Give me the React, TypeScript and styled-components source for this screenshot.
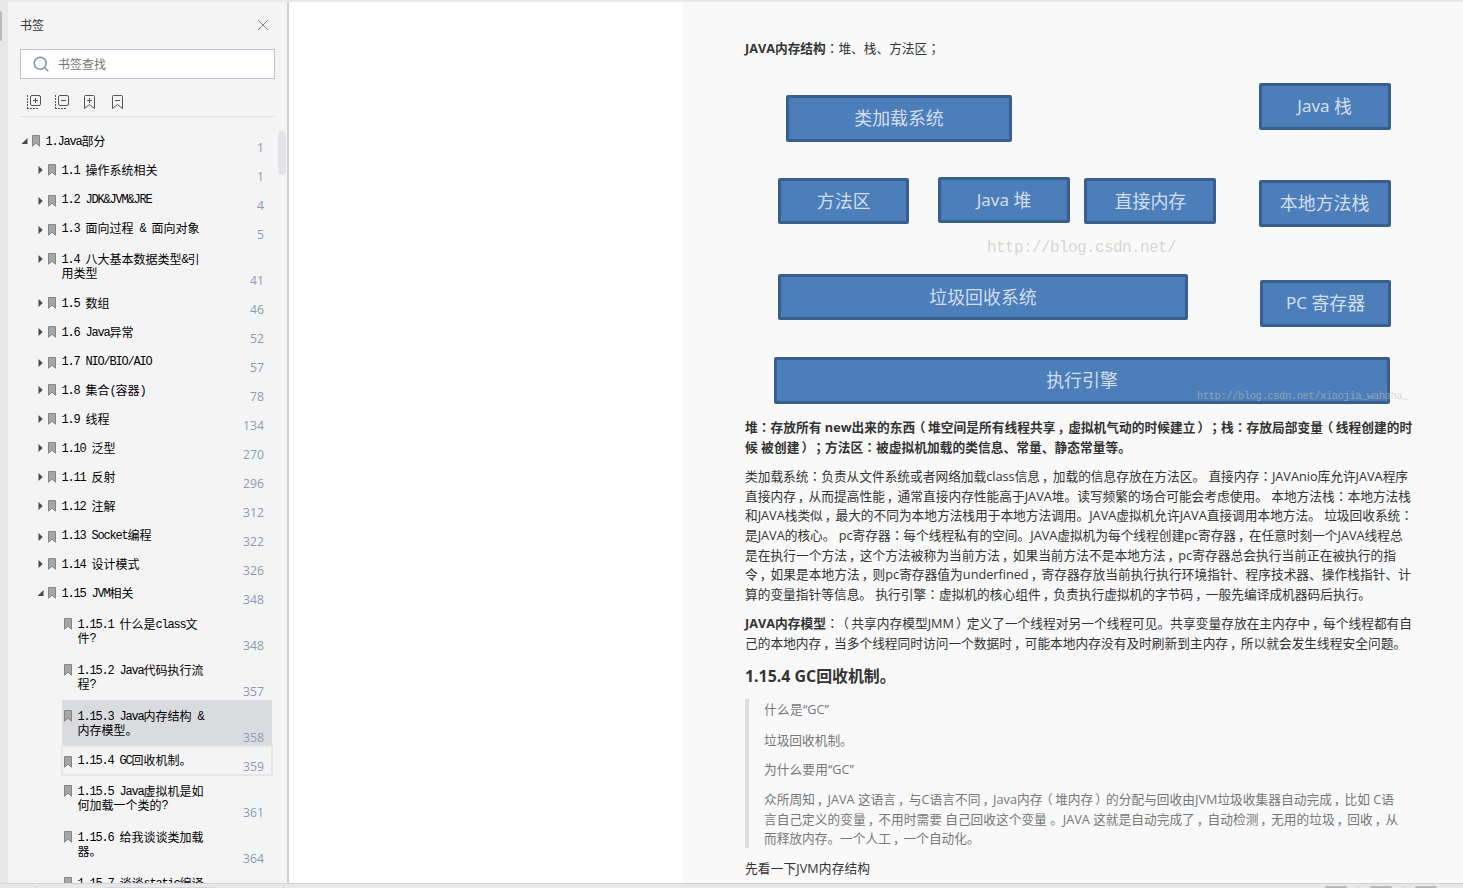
import React from 'react';
import styled, { createGlobalStyle } from 'styled-components';

const GlobalStyle = createGlobalStyle`
  * { box-sizing: border-box; }
  body { margin: 0; overflow: hidden; background: #fff; }
`;

const sans = `"Open Sans", "Noto Sans CJK SC", sans-serif`;

const Window = styled.div`
  width: 1463px;
  height: 888px;
  display: flex;
  flex-direction: column;
  overflow: hidden;
  font-family: ${sans};
`;

const TopEdge = styled.div`
  height: 2px;
  flex: none;
  background: linear-gradient(#e3e3e3, #efefef);
`;

const Workspace = styled.div`
  display: flex;
  height: 881px;
  flex: none;
`;

const LeftRail = styled.div`
  width: 8px;
  padding-top: 9px;
  background: #e8e8e8;
`;

const RailHandle = styled.div`
  width: 2px;
  height: 30px;
  background: #b9b9b9;
  border-radius: 0 2px 2px 0;
`;

const Sidebar = styled.aside`
  width: 281px;
  height: 881px;
  display: flex;
  flex-direction: column;
  overflow: hidden;
  position: relative;
  background: #f4f4f4;
  border-right: 2px solid #d0d0d4;
`;

const SidebarHeader = styled.header`
  display: flex;
  flex: none;
  justify-content: space-between;
  align-items: center;
  height: 45px;
  margin: 0 18px 0 12px;
  font: 12px/18px "Noto Sans CJK SC", sans-serif;
  color: #333;
`;

const SearchBox = styled.div`
  display: flex;
  flex: none;
  align-items: center;
  gap: 9px;
  width: 255px;
  height: 30px;
  margin: 2px 0 0 12px;
  padding-left: 12px;
  background: #fff;
  border: 1px solid #bcc4d0;
  font: 12px/18px "Noto Sans CJK SC", sans-serif;
  color: #757575;
`;

const Toolbar = styled.div`
  display: flex;
  flex: none;
  align-items: center;
  gap: 12px;
  width: 255px;
  height: 38px;
  margin-left: 12px;
  padding: 8px 0 0 6px;
  border-bottom: 1px solid #dcdfe5;
`;

const Tree = styled.div`
  display: flex;
  flex: none;
  flex-direction: column;
  margin-top: 10px;
`;

const ScrollThumb = styled.div`
  position: absolute;
  right: 1px;
  top: 129px;
  width: 8px;
  height: 44px;
  border-radius: 4px;
  background: #e3e4e8;
`;

const rowInset = [13, 29, 54];

const TreeRow = styled.div<{ $level: number; $lines: number; $state?: string }>`
  display: flex;
  flex: none;
  height: ${(p) => (p.$lines > 1 ? 46 : 29)}px;
  width: ${(p) => (p.$level === 2 ? 210 : 256 - rowInset[p.$level])}px;
  margin-left: ${(p) => rowInset[p.$level]}px;
  padding-left: ${(p) => (p.$level === 2 ? 2 : 0)}px;
  padding-right: ${(p) => (p.$level === 2 ? 8 : 0)}px;
  background: ${(p) => (p.$state === 'selected' ? '#dadbdf' : 'transparent')};
  box-shadow: ${(p) =>
    p.$state === 'focused' ? '0 0 0 1px #e6e6e8, inset 0 0 0 1px #e6e6e8, inset 0 1px #d0d3d8' : 'none'};
`;

const ArrowCell = styled.span<{ $drop: number }>`
  width: 11px;
  flex: none;
  padding-top: ${(p) => p.$drop}px;
  line-height: 0;
`;

const MarkCell = styled.span<{ $drop: number }>`
  width: 13.5px;
  flex: none;
  padding-top: ${(p) => p.$drop}px;
  line-height: 0;
`;

const RowTitle = styled.div<{ $lines: number }>`
  flex: 1;
  padding-top: ${(p) => (p.$lines > 1 ? 9 : 7)}px;
  font: 12px/14px "Noto Sans CJK SC", sans-serif;
  color: #000;
  white-space: pre;
`;

const TitleLine = styled.div`
  height: 14px;
  display: flex;
`;

const Mono = styled.span`
  font-family: "Liberation Mono", monospace;
  line-height: 16px;
  letter-spacing: -1.2px;
`;

const PageNo = styled.span`
  align-self: flex-end;
  font: 12.2px/16px ${sans};
  color: #8c9ab4;
`;

const Gutter = styled.div`
  width: 394px;
  background: #fff;
`;

const Page = styled.main`
  width: 780px;
  height: 881px;
  overflow: hidden;
  padding: 36px 0 0 62px;
  background: #f9f9f9;
  color: #333;
`;

const Paragraph = styled.div<{ $gap?: number; $bold?: boolean }>`
  margin-bottom: ${(p) => p.$gap ?? 10}px;
  font-weight: ${(p) => (p.$bold ? 700 : 400)};
`;

const Line = styled.div<{ $w: number }>`
  width: ${(p) => p.$w}px;
  height: 19.6px;
  font-size: 12.7px;
  line-height: 19.6px;
  white-space: nowrap;
  text-spacing-trim: space-all;
  text-align: justify;
  text-align-last: justify;
`;

const Punct = styled.span<{ $shift: number; $tc: boolean }>`
  font-family: ${(p) => (p.$tc ? '"Noto Sans CJK TC"' : '"Noto Sans CJK SC"')}, sans-serif;
  margin-left: ${(p) => p.$shift}px;
  margin-right: ${(p) => -p.$shift}px;
`;

const Heading = styled.h3`
  margin: 0;
  height: 37px;
  font-size: 15.9px;
  line-height: 28px;
  font-weight: 700;
  white-space: nowrap;
`;

const Quote = styled.blockquote`
  height: 149px;
  margin: 0 0 11px;
  padding: 1px 0 0 15px;
  border-left: 4px solid #dadce0;
  color: #777;
`;

const Diagram = styled.div`
  position: relative;
  height: 359.4px;
  margin-left: -62px;
`;

const Block = styled.div<{ $x: number; $y: number; $w: number; $h: number }>`
  position: absolute;
  left: ${(p) => p.$x - 683}px;
  top: ${(p) => p.$y - 57.6}px;
  width: ${(p) => p.$w}px;
  height: ${(p) => p.$h}px;
  display: flex;
  align-items: center;
  justify-content: center;
  background: #4c7eba;
  border: 3.5px solid #385f8e;
  border-radius: 2px;
  color: #d3dfee;
  font: 400 18px/24px "Noto Sans", "Noto Sans CJK SC", sans-serif;
  font-size: 17.9px;
  white-space: nowrap;
`;

const Latin = styled.span`
  font-size: 17px;
  white-space: pre;
`;

const Watermark = styled.span<{ $x: number; $y: number; $size: number; $track: number }>`
  position: absolute;
  left: ${(p) => p.$x - 683}px;
  top: ${(p) => p.$y - 57.6}px;
  font: ${(p) => p.$size}px/20px "Liberation Mono", monospace;
  letter-spacing: ${(p) => p.$track}px;
  color: rgba(190, 190, 180, 0.6);
  white-space: nowrap;
`;

const StatusBar = styled.footer`
  height: 5px;
  flex: none;
  display: flex;
  align-items: flex-end;
  background: #e8e8e8;
  border-top: 1px solid #d3d3d6;
`;

const StatusPiece = styled.i<{ $ml: number; $w: number; $h: number; $c: string }>`
  margin-left: ${(p) => p.$ml}px;
  width: ${(p) => p.$w}px;
  height: ${(p) => p.$h}px;
  background: ${(p) => p.$c};
  border-radius: ${(p) => (p.$w > 1 && p.$h > 1 ? '3px 3px 0 0' : '0')};
`;

const CloseIcon = () => (
  <svg width="12" height="12" viewBox="0 0 12 12" stroke="#858585" fill="none">
    <path d="M1 1L11 11M11 1L1 11" />
  </svg>
);

const SearchIcon = () => (
  <svg width="16" height="16" viewBox="0 0 16 16" stroke="#8590a3" strokeWidth="1.5" fill="none">
    <circle cx="7.2" cy="7.2" r="6" />
    <path d="M11.5 11.5L15.3 15.3" />
  </svg>
);

const BoxIcon = ({ plus }: { plus?: boolean }) => (
  <svg width="16" height="16" viewBox="0 0 16 16" stroke="#555" fill="none">
    <rect x="4.5" y="1.5" width="10" height="10" rx="1.5" />
    <path d="M7 6.5H12" />
    {plus && <path d="M9.5 4V9" />}
    <path d="M1.5 1V15" strokeDasharray="2 1" />
    <path d="M1 14.5H12" strokeDasharray="2 1" />
  </svg>
);

const RibbonIcon = ({ plus }: { plus?: boolean }) => (
  <svg width="16" height="16" viewBox="0 0 16 16" stroke="#555" fill="none">
    <path d="M2.5 14.5V2.5Q2.5 1.5 3.5 1.5H11.5Q12.5 1.5 12.5 2.5V14.5L7.5 10.5Z" />
    <path d="M5 6.5H10" />
    {plus && <path d="M7.5 4V9" />}
  </svg>
);

const Mark = () => (
  <svg width="8" height="12" viewBox="0 0 8 12">
    <path d="M0.5 11.2V0.5H7.5V11.2L4 8.2Z" fill="#a6a6a6" stroke="#858585" />
  </svg>
);

const Arrow = ({ open }: { open?: boolean }) => (
  <svg width="7" height="8" viewBox="0 0 7 8" fill="#4a4a4a">
    {open ? <path d="M6.5 1V7H0.5Z" /> : <path d="M1.5 0L5.7 4L1.5 8Z" />}
  </svg>
);

const TreeText = ({ text }: { text: string }) => (
  <>
    {text.split(/([\x20-\x7e]+)/).map((t, i) => (i % 2 ? <Mono key={i}>{t}</Mono> : t))}
  </>
);

const shifts: Record<string, number> = { '，': 2, '（': -2.5, '）': 2 };

const Prose = ({ text }: { text: string }) => (
  <>
    {text.split(/([，：；（）])/).map((t, i) =>
      i % 2 ? <Punct key={i} $shift={shifts[t] ?? 0} $tc={!(t in shifts)}>{t}</Punct> : t
    )}
  </>
);

type Item = { level: number; title: string; page: string; open?: boolean; state?: string; drop?: number };

const items: Item[] = [
  { level: 0, title: '1.Java部分', page: '1', open: true },
  { level: 1, title: '1.1 操作系统相关', page: '1' },
  { level: 1, title: '1.2 JDK&JVM&JRE', page: '4', drop: 2 },
  { level: 1, title: '1.3 面向过程 & 面向对象', page: '5', drop: 2 },
  { level: 1, title: '1.4 八大基本数据类型&引\n用类型', page: '41', drop: 2 },
  { level: 1, title: '1.5 数组', page: '46' },
  { level: 1, title: '1.6 Java异常', page: '52' },
  { level: 1, title: '1.7 NIO/BIO/AIO', page: '57', drop: 2 },
  { level: 1, title: '1.8 集合(容器)', page: '78' },
  { level: 1, title: '1.9 线程', page: '134' },
  { level: 1, title: '1.10 泛型', page: '270' },
  { level: 1, title: '1.11 反射', page: '296' },
  { level: 1, title: '1.12 注解', page: '312' },
  { level: 1, title: '1.13 Socket编程', page: '322', drop: 2 },
  { level: 1, title: '1.14 设计模式', page: '326' },
  { level: 1, title: '1.15 JVM相关', page: '348', open: true },
  { level: 2, title: '1.15.1 什么是class文\n件?', page: '348', drop: 2 },
  { level: 2, title: '1.15.2 Java代码执行流\n程?', page: '357', drop: 2 },
  { level: 2, title: '1.15.3 Java内存结构 &\n内存模型。', page: '358', state: 'selected', drop: 2 },
  { level: 2, title: '1.15.4 GC回收机制。', page: '359', state: 'focused', drop: 2 },
  { level: 2, title: '1.15.5 Java虚拟机是如\n何加载一个类的?', page: '361', drop: 2 },
  { level: 2, title: '1.15.6 给我谈谈类加载\n器。', page: '364', drop: 2 },
  { level: 2, title: '1.15.7 谈谈static编译\n', page: '', drop: 2 },
];

const blocks: [string, number, number, number, number][] = [
  ['类加载系统', 786, 95, 226, 47],
  ['Java 栈', 1258.6, 83, 132, 47],
  ['方法区', 778, 178, 131.4, 46.4],
  ['Java 堆', 938, 177, 132, 46.4],
  ['直接内存', 1084.4, 178, 132, 46.4],
  ['本地方法栈', 1258.6, 180, 132, 47],
  ['垃圾回收系统', 778, 274, 410, 46.5],
  ['PC 寄存器', 1260, 280, 131, 47],
  ['执行引擎', 774, 357, 616, 47],
];

const heap: [string, number][] = [
  ['堆：存放所有 new出来的东西（堆空间是所有线程共享，虚拟机气动的时候建立）；栈：存放局部变量（线程创建的时', 667],
  ['候 被创建）；方法区：被虚拟机加载的类信息、常量、静态常量等。', 386],
];

const loader: [string, number][] = [
  ['类加载系统：负责从文件系统或者网络加载class信息，加载的信息存放在方法区。 直接内存：JAVAnio库允许JAVA程序', 663],
  ['直接内存，从而提高性能，通常直接内存性能高于JAVA堆。读写频繁的场合可能会考虑使用。 本地方法栈：本地方法栈', 666],
  ['和JAVA栈类似，最大的不同为本地方法栈用于本地方法调用。JAVA虚拟机允许JAVA直接调用本地方法。 垃圾回收系统：', 667],
  ['是JAVA的核心。 pc寄存器：每个线程私有的空间。JAVA虚拟机为每个线程创建pc寄存器，在任意时刻一个JAVA线程总', 657],
  ['是在执行一个方法，这个方法被称为当前方法，如果当前方法不是本地方法，pc寄存器总会执行当前正在被执行的指', 651],
  ['令，如果是本地方法，则pc寄存器值为underfined，寄存器存放当前执行执行环境指针、程序技术器、操作栈指针、计', 666],
  ['算的变量指针等信息。 执行引擎：虚拟机的核心组件，负责执行虚拟机的字节码，一般先编译成机器码后执行。', 626],
];

const gc: [string, number][] = [
  ['众所周知，JAVA 这语言，与C语言不同，Java内存（堆内存）的分配与回收由JVM垃圾收集器自动完成，比如 C语', 630],
  ['言自己定义的变量，不用时需要 自己回收这个变量 。JAVA 这就是自动完成了，自动检测，无用的垃圾，回收，从', 634],
  ['而释放内存。一个人工，一个自动化。', 215],
];

const Lines = ({ rows }: { rows: [string, number][] }) => (
  <>
    {rows.map(([t, w]) => (
      <Line key={t} $w={w}><Prose text={t} /></Line>
    ))}
  </>
);

const Row = ({ item }: { item: Item }) => {
  const lines = item.title.split('\n');
  const drop = 8 + (item.drop ?? 0);
  return (
    <TreeRow $level={item.level} $lines={lines.length} $state={item.state}>
      {item.level < 2 && <ArrowCell $drop={drop + 2}><Arrow open={item.open} /></ArrowCell>}
      <MarkCell $drop={drop}><Mark /></MarkCell>
      <RowTitle $lines={lines.length}>
        {lines.map((l, i) => <TitleLine key={i}><TreeText text={l} /></TitleLine>)}
      </RowTitle>
      <PageNo>{item.page}</PageNo>
    </TreeRow>
  );
};

export default function App() {
  return (
    <Window>
      <GlobalStyle />
      <TopEdge />
      <Workspace>
        <LeftRail><RailHandle /></LeftRail>
        <Sidebar>
          <SidebarHeader>书签<CloseIcon /></SidebarHeader>
          <SearchBox><SearchIcon />书签查找</SearchBox>
          <Toolbar>
            <BoxIcon plus />
            <BoxIcon />
            <RibbonIcon plus />
            <RibbonIcon />
          </Toolbar>
          <Tree>
            {items.map((item) => <Row key={item.title} item={item} />)}
          </Tree>
          <ScrollThumb />
        </Sidebar>
        <Gutter />
        <Page>
          <Paragraph $gap={0}>
            <Line $w={192}><b>JAVA内存结构</b><Prose text="：堆、栈、方法区；" /></Line>
          </Paragraph>
          <Diagram>
            {blocks.map(([t, x, y, w, h]) => {
              const latin = t.match(/^[\x20-\x7e]*/)![0];
              return (
                <Block key={t} $x={x} $y={y} $w={w} $h={h}>
                  {latin && <Latin>{latin}</Latin>}
                  {t.slice(latin.length)}
                </Block>
              );
            })}
            <Watermark $x={987} $y={238} $size={16} $track={-0.6}>http://blog.csdn.net/</Watermark>
            <Watermark $x={1197} $y={386} $size={10.5} $track={-0.44}>http://blog.csdn.net/xiaojia_wahaha_</Watermark>
          </Diagram>
          <Paragraph $bold><Lines rows={heap} /></Paragraph>
          <Paragraph><Lines rows={loader} /></Paragraph>
          <Paragraph $gap={9.6}>
            <Line $w={667}><b>JAVA内存模型</b><Prose text="：（共享内存模型JMM）定义了一个线程对另一个线程可见。共享变量存放在主内存中，每个线程都有自" /></Line>
            <Line $w={661}><Prose text="己的本地内存，当多个线程同时访问一个数据时，可能本地内存没有及时刷新到主内存，所以就会发生线程安全问题。" /></Line>
          </Paragraph>
          <Heading>1.15.4 GC回收机制。</Heading>
          <Quote>
            <Paragraph $gap={11}><Line $w={65}>什么是“GC”</Line></Paragraph>
            <Paragraph><Line $w={86}>垃圾回收机制。</Line></Paragraph>
            <Paragraph $gap={9.2}><Line $w={90}>为什么要用“GC”</Line></Paragraph>
            <Lines rows={gc} />
          </Quote>
          <Line $w={125}>先看一下JVM内存结构</Line>
        </Page>
      </Workspace>
      <StatusBar>
        <StatusPiece $ml={36} $w={1} $h={2} $c="#d0d0d0" />
        <StatusPiece $ml={68} $w={110} $h={1} $c="#d6d8de" />
        <StatusPiece $ml={68} $w={1} $h={2} $c="#d0d0d0" />
        <StatusPiece $ml={1041} $w={22} $h={2} $c="#b8b8b8" />
        <StatusPiece $ml={11} $w={1} $h={2} $c="#d0d0d0" />
        <StatusPiece $ml={11} $w={22} $h={2} $c="#b8b8b8" />
        <StatusPiece $ml={11} $w={1} $h={2} $c="#d0d0d0" />
        <StatusPiece $ml={11} $w={22} $h={2} $c="#b8b8b8" />
      </StatusBar>
    </Window>
  );
}
